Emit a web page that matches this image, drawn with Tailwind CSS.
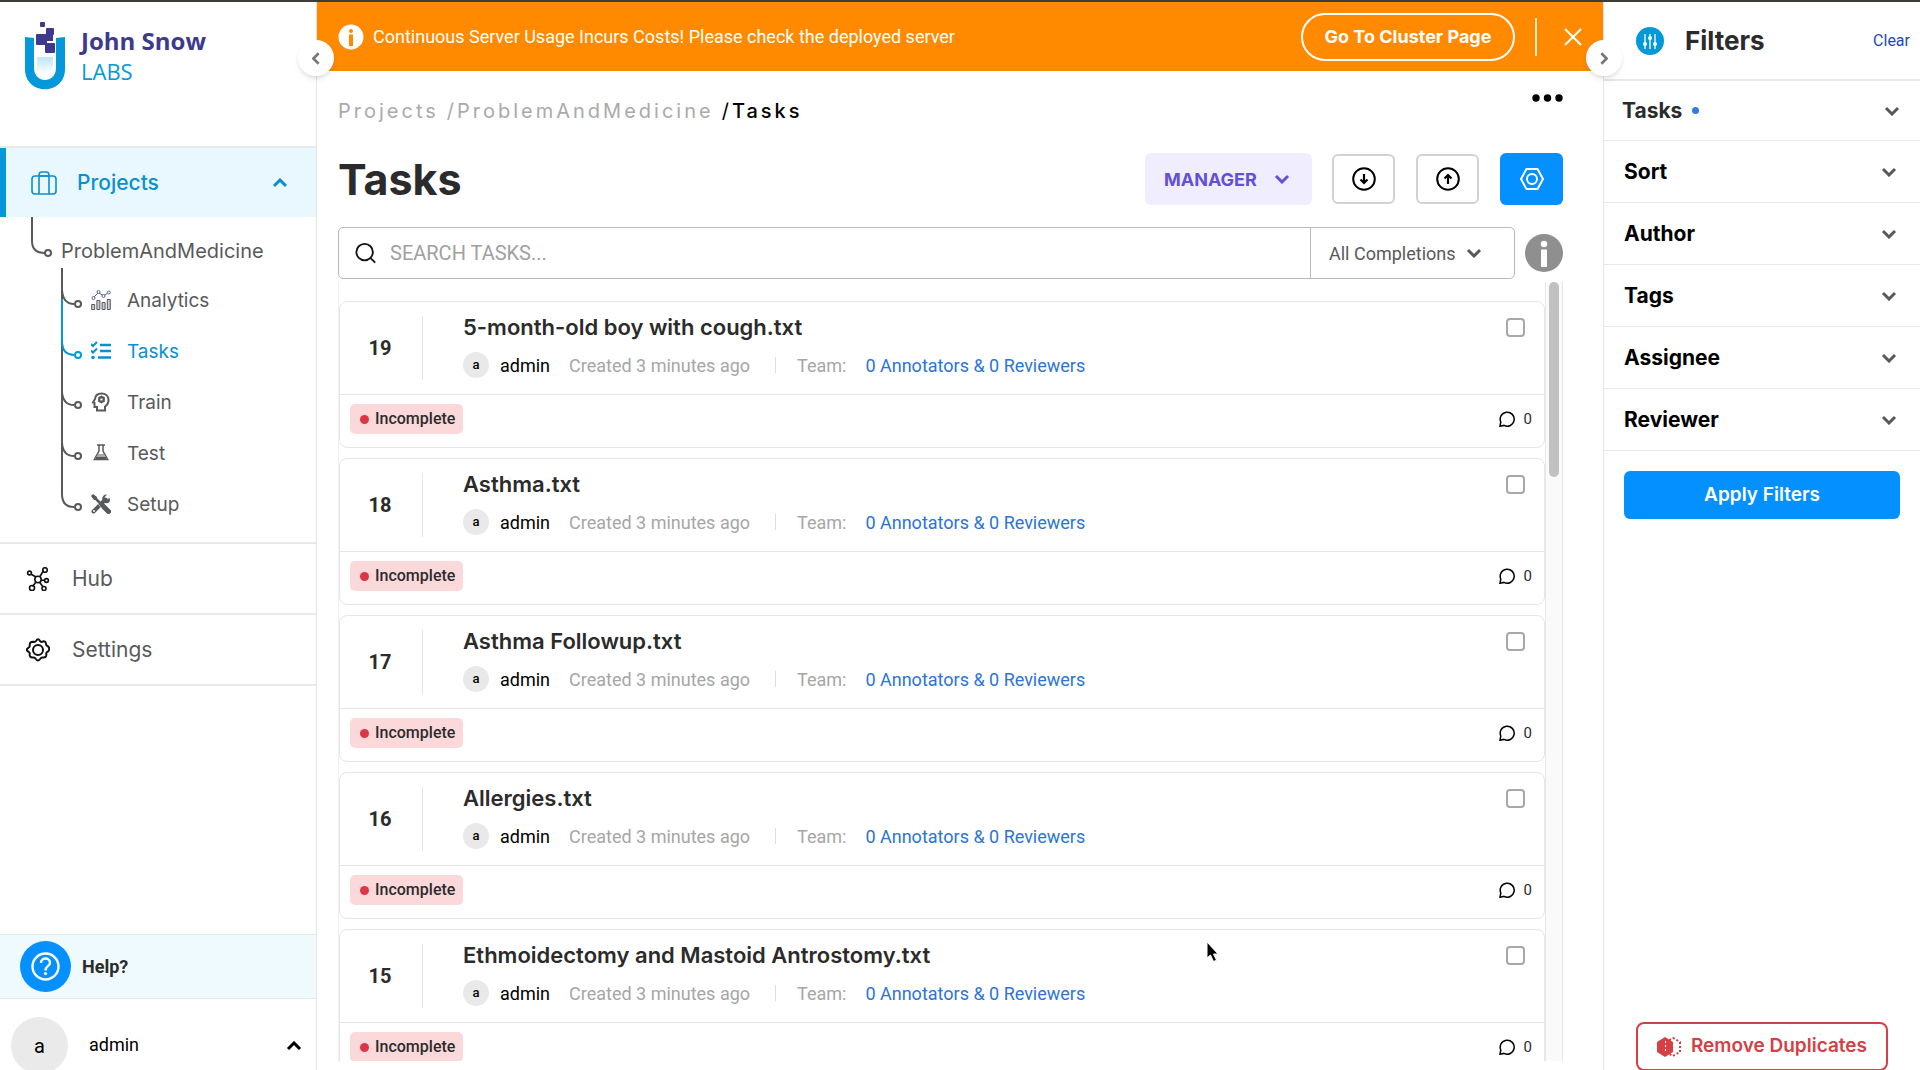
<!DOCTYPE html>
<html lang="en">
<head>
<meta charset="utf-8">
<title>Tasks</title>
<script src="https://cdn.jsdelivr.net/npm/@tailwindcss/browser@4"></script>
</head>
<body class="flex h-screen flex-col overflow-hidden bg-white font-[Roboto,sans-serif] text-[#2b2b2b]">
<svg class="hidden">
  <symbol id="chev" viewBox="0 0 16 10"><path d="M2 2l6 6 6-6" fill="none" stroke="currentColor" stroke-width="3"/></symbol>
</svg>
<div class="h-[2px] shrink-0 bg-[#3d3a38]"></div>
<div class="flex min-h-0 flex-1">

  <!-- Sidebar -->
  <aside class="relative z-10 flex w-[317px] shrink-0 flex-col border-r border-[#e6e6e6] font-[Inter,sans-serif] text-[#58595b]">
    <a href="#" class="flex h-[146px] items-start gap-4 border-b-2 border-[#e8e9ea] pt-5 pl-[25px]">
      <svg class="h-[68px] w-10" viewBox="0 0 40 68">
        <defs><linearGradient id="lg" x1="0" y1="0" x2="0" y2="1"><stop offset="0" stop-color="#bfe5f8"/><stop offset="1" stop-color="#fff"/></linearGradient></defs>
        <path d="M0 15l9 1v30c0 16 22 16 22 0V16l9-1v32c0 27-40 27-40 0z" fill="#0398da"/>
        <path d="M12 35h16v14q-8 6-16 0z" fill="url(#lg)"/>
        <g fill="#3d3a8e"><rect x="15" y="0" width="5" height="5" rx="1"/><rect x="21" y="6" width="8" height="7" rx="1"/><rect x="11" y="12" width="11" height="11" rx="1"/><rect x="20" y="12" width="8" height="7"/><rect x="20" y="21" width="10" height="10" rx="1"/></g>
      </svg>
      <span class="flex flex-col pt-[3px] font-['Open_Sans',sans-serif]">
        <span class="text-[24px] leading-[31px] font-bold text-[#3d3a8e]">John Snow</span>
        <span class="text-[22px] leading-[30px] font-normal text-[#0398da]">LABS</span>
      </span>
    </a>
    <nav class="flex flex-col">
      <a href="#" class="flex h-[69px] items-center border-l-[6px] border-[#0398da] bg-[#e9f8ff] pl-[25px] text-[#0a8fd0]">
        <svg class="h-6 w-[26px]" viewBox="0 0 26 24" fill="none" stroke="currentColor" stroke-width="1.6"><rect x="1" y="5" width="24" height="18" rx="3"/><path d="M8 23V4q0-3 3-3h4q3 0 3 3v19M8 5h10"/></svg>
        <span class="ml-5 flex-1 text-[21px] font-medium">Projects</span>
        <svg class="mr-7 h-[10px] w-4 rotate-180"><use href="#chev"/></svg>
      </a>
      <div class="flex h-[60px] items-start">
        <svg class="h-10 w-[61px]" viewBox="0 0 61 40" fill="none" stroke="currentColor" stroke-width="2"><path d="M32 0v24q0 12 13 12"/><circle cx="48" cy="36" r="3"/></svg>
        <a href="#" class="pt-5 text-[20px] leading-[28px]">ProblemAndMedicine</a>
      </div>
      <div class="flex h-[265px]">
        <svg class="ml-[61px] h-[252px] w-[22px] shrink-0 -mt-[9px]" viewBox="0 0 22 252" fill="none" stroke="#58595b" stroke-width="2">
          <path d="M1 0v226q0 13 12 13"/>
          <path d="M1 22q1 14 12 14M1 124q1 13 12 13M1 175q1 13 12 13"/>
          <path d="M1 31v44q1 12 12 12" stroke="#0398da"/>
          <circle cx="17" cy="36" r="3"/><circle cx="17" cy="87" r="3" stroke="#0398da"/><circle cx="17" cy="137" r="3"/><circle cx="17" cy="188" r="3"/><circle cx="17" cy="239" r="3"/>
        </svg>
        <div class="-mt-[1px] ml-2 grid flex-1 auto-rows-[51px] content-start text-[19px]">
          <a href="#" class="flex items-center gap-4">
            <svg class="h-5 w-5 -translate-y-0.5" viewBox="0 0 20 20" fill="#c9ccd4" stroke="#58595b"><path d="M.7 14.500h3v5h-3zM5.900 10.500h3v9h-3zM11.100 12.500h3v7h-3zM16.300 9.500h3v10h-3z"/><path d="M2.500 7.500l5-5 5 3.500 5-3.500" fill="none"/><g fill="#fff" stroke="#4f63a3"><circle cx="2.500" cy="8" r="1.500"/><circle cx="7.500" cy="2" r="1.500"/><circle cx="12.500" cy="6" r="1.500"/><circle cx="17.800" cy="2.500" r="1.500"/></g></svg>Analytics</a>
          <a href="#" class="flex items-center gap-4 text-[#0a8fd0]">
            <svg class="h-5 w-5 -translate-y-0.5" viewBox="0 0 20 20" fill="none" stroke="currentColor" stroke-width="2"><path d="M9 4h11M9 10h11M7 16.500h13" stroke-width="2.400"/><path d="M0 3l2 2 4-4M0 9.500l2 2 4-4"/><circle cx="2" cy="16.500" r="1.800" fill="currentColor" stroke="none"/></svg>Tasks</a>
          <a href="#" class="flex items-center gap-4">
            <svg class="h-5 w-5 -translate-y-0.5" viewBox="0 0 20 20" fill="none" stroke="currentColor" stroke-width="2"><path d="M6 18.500v-3.500H3.500v-4L2 10.500 4 7C4.500 3 7 1.500 10.500 1.500c4 0 7 2.500 7 6.500 0 3-1 5-3.500 6.500v4z"/><circle cx="10.500" cy="7.500" r="2.400"/><path d="M10.500 3.500v8M7 5.500l7 4M7 9.500l7-4" stroke-width="1"/><circle cx="10.500" cy="7.500" r="1" fill="#fff" stroke="none"/></svg>Train</a>
          <a href="#" class="flex items-center gap-4">
            <svg class="h-5 w-5 -translate-y-0.5" viewBox="0 0 20 20" fill="none" stroke="currentColor" stroke-width="1.500"><path d="M6 2h8M8 2v6l-4.700 8.500h13.400L12 8V2"/><path d="M7 11h6l2.500 4.500h-11z" fill="#a9a9a9" stroke="none"/><path d="M5 15h10" stroke-width="2"/></svg>Test</a>
          <a href="#" class="flex items-center gap-4">
            <svg class="h-5 w-5 -translate-y-0.5" viewBox="0 0 20 20" fill="none" stroke="currentColor"><path d="M2 2l8 8" stroke-width="2.500"/><path d="M0 2L2 0l4 3v3H3z" fill="currentColor" stroke="none"/><path d="M12 12l5.500 5.500" stroke-width="5" stroke-linecap="round"/><path d="M2.500 17.500l12-12" stroke-width="4" stroke-linecap="round"/><path d="M16 .5l-2.500 3L15 6l3.500-2c2 4-2.500 6.500-5 4.500l-2-2.500C10.500 3 13 0 16 .5z" fill="currentColor" stroke="none"/><path d="M6 8.500l4.500 5.500" stroke="#fff" stroke-width="1" opacity="0.500"/><circle cx="3" cy="17" r="1" fill="#fff" stroke="none"/></svg>Setup</a>
        </div>
      </div>
      <a href="#" class="flex h-[71px] items-center gap-[22px] border-t-2 border-[#e8e9ea] pl-[26px] text-[21px]">
        <svg class="h-6 w-6" viewBox="0 0 24 24" fill="none" stroke="#111" stroke-width="1.600"><path d="M10 10L5.500 7.500M14 9.500l3.500-6M15 13l4 .5M13.500 15l3.500 5M10 15l-3.500 4.500"/><circle cx="12" cy="12.500" r="3.200"/><circle cx="3.500" cy="6" r="1.900"/><circle cx="19" cy="3" r="2.300"/><circle cx="20.500" cy="13.500" r="1.900"/><circle cx="18" cy="21.500" r="2"/><circle cx="6" cy="21" r="2.500"/></svg>Hub</a>
      <a href="#" class="flex h-[71px] items-center gap-[22px] border-t-2 border-[#e8e9ea] pl-[26px] text-[21px]">
        <svg class="h-6 w-6" viewBox="0 0 24 24" fill="none" stroke="#111" stroke-width="2"><circle cx="12" cy="12" r="5"/><path d="M10 3q2-3.500 4 0 .8 1.400 2.300.7 3.500-1.400 3.700 2.300 0 1 .7 1.500Q24 9 23 12q-.5 1.500-1.800 2 -1.200.7-.9 2.200.4 3.600-3.300 3.300-1.700-.4-2.500 1-2.500 4-5 0-.8-1.400-2.500-1-3.700.3-3.300-3.300.3-1.500-.9-2.200Q-1 12 2.300 9.800 4 9 3.700 7.500 3.500 3.500 7.200 3.700 9 4.400 10 3z"/></svg>Settings</a>
      <div class="border-t-2 border-[#e8e9ea]"></div>
    </nav>
    <div class="mt-auto flex flex-col font-[Roboto,sans-serif]">
      <a href="#" class="flex h-[65px] items-center gap-[11px] border-y border-[#e4e8ea] bg-[#effaff] pl-5 text-[18px] font-bold text-[#2b2b2b]">
        <svg class="h-[51px] w-[51px]" viewBox="0 0 51 51"><circle cx="25.500" cy="25.500" r="25.500" fill="#0590ff"/><g fill="none" stroke="#fff" stroke-width="2.400"><circle cx="25.500" cy="25.500" r="13"/><path d="M21 22c0-6 9-6 9 0 0 3-4.500 3-4.500 7.500"/></g><circle cx="25.500" cy="32.500" r="1.600" fill="#fff"/></svg>Help?</a>
      <button class="flex h-[71px] items-end text-left text-[18px] text-black">
        <span class="ml-[11px] -mb-[4px] flex h-[57px] w-[57px] items-center justify-center rounded-full bg-[#eaeaea] text-[20px]">a</span>
        <span class="ml-[21px] flex-1 pb-3">admin</span>
        <svg class="mr-[14px] mb-[19px] h-[10px] w-4 rotate-180"><use href="#chev"/></svg>
      </button>
    </div>
    <button aria-label="Collapse menu" class="absolute top-[38px] -right-[18px] flex h-9 w-9 items-center justify-center rounded-full bg-white text-[#777] shadow-md"><svg class="h-[9px] w-[14px] rotate-90" viewBox="0 0 16 10"><use href="#chev"/></svg></button>
  </aside>

  <!-- Tasks -->
  <main class="flex min-w-0 flex-1 flex-col">
    <div class="flex h-[69px] shrink-0 items-center bg-[#ff8a00] pr-[21px] pl-[21px] text-white">
      <svg class="h-[26px] w-[26px]" viewBox="0 0 26 26"><circle cx="13" cy="13" r="12.500" fill="#fff"/><circle cx="13" cy="7" r="2" fill="#ff8a00"/><rect x="11" y="10.500" width="4" height="11.500" fill="#ff8a00"/></svg>
      <span class="ml-[9px] flex-1 text-[18px]">Continuous Server Usage Incurs Costs! Please check the deployed server</span>
      <button class="h-12 w-[214px] rounded-full border-2 border-white font-[Inter,sans-serif] text-[18px] font-bold">Go To Cluster Page</button>
      <span class="ml-5 h-[38px] w-[2px] bg-white/80"></span>
      <button aria-label="Dismiss" class="ml-[27px]"><svg class="h-[18px] w-[18px]" viewBox="0 0 18 18" stroke="#fff" stroke-width="2"><path d="M1 1l16 16M17 1L1 17"/></svg></button>
    </div>
    <div class="flex min-h-0 flex-1 flex-col pr-[40px] pl-[21px] pb-[9px]">
      <div class="flex h-[70px] shrink-0 items-center justify-between">
        <nav class="flex items-center pt-[10px] text-[20px] font-[Inter,sans-serif] tracking-[3px] text-[#aaa]"><a href="#">Projects</a><span class="ml-2">/</span><a href="#">ProblemAndMedicine</a><span class="ml-2 text-black">/</span><a href="#" class="font-medium text-black">Tasks</a></nav>
        <button aria-label="More" class="pb-[16px]"><svg class="h-2 w-[31px]" viewBox="0 0 31 8"><circle cx="4" cy="4" r="3.700"/><circle cx="15.500" cy="4" r="3.700"/><circle cx="27" cy="4" r="3.700"/></svg></button>
      </div>
      <div class="flex h-[76px] shrink-0 items-center">
        <h1 class="flex-1 font-[Inter,sans-serif] text-[43px] leading-[52px] font-bold">Tasks</h1>
        <label class="relative flex items-center text-[#6250d8]">
          <select aria-label="Role" class="h-[52px] w-[167px] appearance-none rounded-md bg-[#f0eefe] pl-[19px] font-[Inter,sans-serif] text-[18px] font-bold"><option>MANAGER</option></select>
          <svg class="pointer-events-none absolute right-[22px] h-[10px] w-4"><use href="#chev"/></svg>
        </label>
        <button aria-label="Export" class="ml-5 flex h-[50px] w-[63px] items-center justify-center rounded-md border-2 border-[#d2d2d2]"><svg class="h-6 w-6" viewBox="0 0 24 24" fill="none" stroke="#000" stroke-width="2"><circle cx="12" cy="12" r="10.800"/><path d="M12 7v9M8.500 12.500L12 16l3.500-3.500" stroke-width="2.200"/></svg></button>
        <button aria-label="Import" class="ml-[21px] flex h-[50px] w-[63px] items-center justify-center rounded-md border-2 border-[#d2d2d2]"><svg class="h-6 w-6" viewBox="0 0 24 24" fill="none" stroke="#000" stroke-width="2"><circle cx="12" cy="12" r="10.800"/><path d="M12 17V8M8.500 11.500L12 8l3.500 3.500" stroke-width="2.200"/></svg></button>
        <button aria-label="Configure" class="ml-[21px] flex h-[52px] w-[63px] items-center justify-center rounded-md bg-[#0590ff]"><svg class="h-6 w-6" viewBox="0 0 24 24" fill="none" stroke="#fff" stroke-width="2"><path d="M6.500 2h11L23 12l-5.500 10h-11L1 12z"/><circle cx="12" cy="12" r="5"/></svg></button>
      </div>
      <div class="mt-[10px] flex shrink-0 items-center">
        <div class="flex h-[52px] flex-1 items-center rounded-[5px] border border-[#b9b9b9]">
          <svg class="ml-4 h-[22px] w-[22px]" viewBox="0 0 24 24" fill="none" stroke="#111" stroke-width="2"><circle cx="10.500" cy="11" r="9"/><path d="M17 17.500l5 5"/></svg>
          <input type="text" aria-label="Search tasks" placeholder="SEARCH TASKS..." class="ml-[13px] h-full min-w-0 flex-1 text-[20px] outline-none placeholder:text-[#a0a0a0]">
          <label class="relative flex h-full items-center border-l border-[#b9b9b9] text-[#58595b]">
            <select aria-label="Completions" class="h-full w-[203px] appearance-none bg-transparent pl-[18px] text-[18px]"><option>All Completions</option></select>
            <svg class="pointer-events-none absolute right-8 h-[10px] w-4"><use href="#chev"/></svg>
          </label>
        </div>
        <button aria-label="Info" class="ml-[10px]"><svg class="h-[38px] w-[38px]" viewBox="0 0 38 38"><circle cx="19" cy="19" r="19" fill="#8f8f8f"/><circle cx="19" cy="10" r="3.200" fill="#fff"/><rect x="16" y="15.500" width="6" height="17.500" fill="#fff"/></svg></button>
      </div>
      <div class="mt-[3px] flex min-h-0 flex-1">
        <ul id="tasks" class="flex min-h-0 flex-1 flex-col gap-[10px] overflow-hidden border-l border-[#f0f0f0] pt-[19px]"></ul>
        <div class="w-[18px] border-x border-[#e8e8e8] bg-[#fafafa] px-[3px]"><div class="h-[195px] rounded-full bg-[#c1c1c1]"></div></div>
      </div>
    </div>
  </main>

  <!-- Filters -->
  <aside class="relative z-10 flex w-[317px] shrink-0 flex-col border-l border-[#e6e6e6] font-[Inter,sans-serif]">
    <button aria-label="Collapse filters" class="absolute top-[38px] -left-[18px] flex h-9 w-9 items-center justify-center rounded-full bg-white text-[#777] shadow-md"><svg class="h-[9px] w-[14px] -rotate-90" viewBox="0 0 16 10"><use href="#chev"/></svg></button>
    <div class="flex h-[79px] items-center border-b-2 border-[#e8e8e8] pr-[10px] pl-8">
      <svg class="h-7 w-7" viewBox="0 0 28 28"><circle cx="14" cy="14" r="14" fill="#0398da"/><path d="M9 7v15M14 7v15M19 7v15" stroke="#fff" stroke-width="1.300"/><g fill="#fff"><circle cx="9" cy="17" r="2"/><circle cx="14" cy="11" r="2"/><circle cx="19" cy="17" r="2"/></g></svg>
      <h2 class="ml-[21px] flex-1 text-[26px] leading-[32px] font-bold">Filters</h2>
      <button class="font-[Roboto,sans-serif] text-[16px] text-[#1f49b6]">Clear</button>
    </div>
    <div id="filters" class="flex flex-col text-[21px] font-bold"></div>
    <button class="mx-5 mt-5 h-12 rounded-md bg-[#0590ff] text-[19px] font-semibold text-white">Apply Filters</button>
    <button class="mx-8 mt-auto -mb-[1px] flex h-[49px] items-center justify-center gap-[10px] rounded-lg border-2 border-[#d64045] text-[19px] font-semibold text-[#d64045]">
      <svg class="h-5 w-6" viewBox="0 0 24 20"><path d="M8 0l8 5v10l-8 5-8-5V5z" fill="currentColor"/><path d="M16 1l7 4v10l-7 4-7-4V5z" fill="none" stroke="currentColor" stroke-width="2" stroke-dasharray="2 2"/><path d="M8.500 4v12" stroke="#fff" stroke-dasharray="2 2"/></svg>Remove Duplicates</button>
  </aside>
</div>
<!-- Pointer -->
<svg class="pointer-events-none absolute top-[941px] left-[1206px] z-20 h-[22px] w-[14px]" viewBox="0 0 14 22"><path d="M1 1v16l3.500-3 3 6.500 3-1.300L7.500 13H12z" fill="#000" stroke="#fff"/></svg>
<script>
const tasks = [[19,'5-month-old boy with cough.txt'],[18,'Asthma.txt'],[17,'Asthma Followup.txt'],[16,'Allergies.txt'],[15,'Ethmoidectomy and Mastoid Antrostomy.txt']];
document.getElementById('tasks').innerHTML = tasks.map(([n, t]) => `
<li class="flex h-[147px] shrink-0 flex-col rounded-lg border border-[#e6e6e6]">
  <div class="flex h-[93px] border-b border-[#e6e6e6]">
    <span class="my-[14px] flex w-[83px] shrink-0 items-center justify-center border-r border-[#e6e6e6] pr-[2px] text-[20px] font-bold">${n}</span>
    <div class="ml-10 flex flex-1 flex-col pt-[10px]">
      <h3 class="font-[Inter,sans-serif] text-[22px] leading-[30px] font-semibold">${t}</h3>
      <div class="mt-2 flex h-[30px] items-center text-[18px] text-[#a6a6a6]">
        <span class="flex h-[26px] w-[26px] items-center justify-center rounded-full bg-[#e9e9e9] text-[13px] font-medium text-black">a</span>
        <span class="ml-[11px] text-black">admin</span><span class="ml-[19px]">Created 3 minutes ago</span>
        <span class="mr-[21px] ml-[25px] h-4 w-px bg-[#ddd]"></span><span>Team:</span><a href="#" class="ml-[19px] text-[#2b74d8]">0 Annotators &amp; 0 Reviewers</a>
      </div>
    </div>
    <input type="checkbox" aria-label="Select ${t}" class="mt-[16px] mr-[19px] h-[19px] w-[19px] appearance-none rounded-[4px] border-2 border-[#a8a8a8]">
  </div>
  <div class="flex flex-1 items-center justify-between pr-3 pb-1 pl-[10px]">
    <span class="flex h-[30px] w-[113px] items-center gap-[6px] rounded-[5px] bg-[#fbd9db] pl-[10px] text-[16px] font-medium"><i class="h-[9px] w-[9px] rounded-full bg-[#dc3545]"></i>Incomplete</span>
    <button class="flex items-center gap-[9px] text-[15px]"><svg class="h-4 w-4" viewBox="0 0 16 16" fill="none" stroke="#000" stroke-width="1.500"><path d="M1 15.200l.8-4.200A7 7 0 1 1 5 14.400z"/></svg>0</button>
  </div>
</li>`).join('');
document.getElementById('filters').innerHTML = ['Tasks','Sort','Author','Tags','Assignee','Reviewer'].map((f, i) => `
<button class="flex items-center border-b border-[#e8e8e8] text-left ${i ? 'h-[62px] pr-[23px] pl-5 text-black' : 'h-[60px] pr-5 pl-[18px]'}">${f}${i ? '' : '<i class="ml-[10px] h-[7px] w-[7px] rounded-full bg-[#2f7de1]"></i>'}<svg class="ml-auto h-[10px] w-4 text-[#58595b]"><use href="#chev"/></svg></button>`).join('');
</script>
</body>
</html>
